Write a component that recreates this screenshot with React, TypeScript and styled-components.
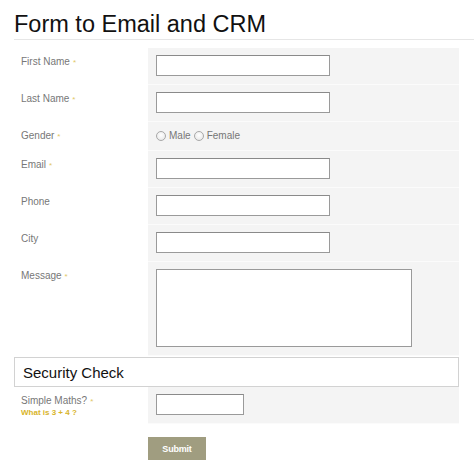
import { createGlobalStyle } from "styled-components";
import styled from "styled-components";

const GlobalStyle = createGlobalStyle`
  html, body {
    margin: 0;
    padding: 0;
    background: #ffffff;
  }
  body {
    font-family: "Liberation Sans", Arial, sans-serif;
  }
`;

const DIV_Page = styled.div`
  width: 474px;
  height: 476px;
  padding-left: 14px;
  box-sizing: border-box;
  overflow: hidden;
`;

const H1_Title = styled.h1`
  margin: 11px 0 8px;
  padding-bottom: 1px;
  font-size: 23.5px;
  line-height: 27px;
  font-weight: normal;
  color: #111;
  border-bottom: 1px solid #e6e6e6;
`;

const DIV_Form = styled.div`
  width: 445px;
`;

const DIV_Row = styled.div`
  display: grid;
  grid-template-columns: 134px 1fr;
`;

const DIV_Label = styled.div`
  padding: 7px 0 0 7px;
  font-size: 10px;
  line-height: 13px;
  color: #777;
`;

const SPAN_Req = styled.span`
  margin-left: 3px;
  font-size: 8px;
  color: #e2c766;
`;

const SPAN_Hint = styled.span`
  display: block;
  font-size: 8px;
  line-height: 10px;
  font-weight: bold;
  color: #d8b42a;
`;

const DIV_Field = styled.div<{ $short?: boolean }>`
  background: #f4f4f4;
  border-bottom: 1px solid #fbfbfb;
  padding: ${(p) => (p.$short ? "6px 8px 6px" : "7px 8px 8px")};
  display: flex;
  align-items: center;
`;

const INPUT_Text = styled.input<{ $w?: number }>`
  width: ${(p) => p.$w ?? 174}px;
  height: 21px;
  box-sizing: border-box;
  border: 1px solid #9a9a9a;
  border-top-color: #8a8a8a;
  background: #fff;
  margin: 0;
  padding: 2px 4px;
  font: inherit;
`;

const TEXTAREA_Message = styled.textarea`
  width: 256px;
  height: 78px;
  box-sizing: border-box;
  border: 1px solid #9a9a9a;
  background: #fff;
  margin: 0;
  resize: none;
  display: block;
`;

const LABEL_Radio = styled.label`
  display: inline-flex;
  align-items: center;
  font-size: 10px;
  line-height: 16px;
  color: #777;
  margin-right: 3px;
`;

const INPUT_Radio = styled.input`
  appearance: none;
  width: 10px;
  height: 10px;
  margin: 0 3px 0 0;
  border-radius: 50%;
  border: 1px solid #a8a8a8;
  background: radial-gradient(circle at 50% 40%, #ffffff 0%, #e4e4e4 100%);
`;

const DIV_Section = styled.div`
  margin-top: 1px;
  height: 30px;
  box-sizing: border-box;
  border: 1px solid #d2d2d2;
  padding-left: 8px;
  display: flex;
  align-items: center;
  font-size: 15px;
  color: #111;
  background: #fff;
`;

const DIV_Actions = styled.div`
  padding: 13px 0 0 134px;
`;

const BUTTON_Submit = styled.button`
  width: 58px;
  height: 23px;
  border: none;
  background: #a09d80;
  color: #fff;
  font-family: "Liberation Sans", Arial, sans-serif;
  font-size: 9px;
  font-weight: bold;
  letter-spacing: -0.2px;
  padding: 0;
`;

type FieldDef = {
  label: string;
  required?: boolean;
  kind: "text" | "gender" | "message";
};

const fields: FieldDef[] = [
  { label: "First Name", required: true, kind: "text" },
  { label: "Last Name", required: true, kind: "text" },
  { label: "Gender", required: true, kind: "gender" },
  { label: "Email", required: true, kind: "text" },
  { label: "Phone", kind: "text" },
  { label: "City", kind: "text" },
  { label: "Message", required: true, kind: "message" },
];

const App = () => {
  return (
    <>
      <GlobalStyle />
      <DIV_Page>
        <H1_Title>Form to Email and CRM</H1_Title>
        <DIV_Form>
          {fields.map((f) => (
            <DIV_Row key={f.label}>
              <DIV_Label>
                {f.label}
                {f.required && <SPAN_Req>*</SPAN_Req>}
              </DIV_Label>
              {f.kind === "text" && (
                <DIV_Field>
                  <INPUT_Text type="text" />
                </DIV_Field>
              )}
              {f.kind === "gender" && (
                <DIV_Field $short>
                  <LABEL_Radio>
                    <INPUT_Radio type="radio" name="gender" />
                    Male
                  </LABEL_Radio>
                  <LABEL_Radio>
                    <INPUT_Radio type="radio" name="gender" />
                    Female
                  </LABEL_Radio>
                </DIV_Field>
              )}
              {f.kind === "message" && (
                <DIV_Field>
                  <TEXTAREA_Message />
                </DIV_Field>
              )}
            </DIV_Row>
          ))}
          <DIV_Section>Security Check</DIV_Section>
          <DIV_Row>
            <DIV_Label>
              Simple Maths?<SPAN_Req>*</SPAN_Req>
              <SPAN_Hint>What is 3 + 4 ?</SPAN_Hint>
            </DIV_Label>
            <DIV_Field>
              <INPUT_Text type="text" $w={88} />
            </DIV_Field>
          </DIV_Row>
          <DIV_Actions>
            <BUTTON_Submit type="button">Submit</BUTTON_Submit>
          </DIV_Actions>
        </DIV_Form>
      </DIV_Page>
    </>
  );
};

export default App;
